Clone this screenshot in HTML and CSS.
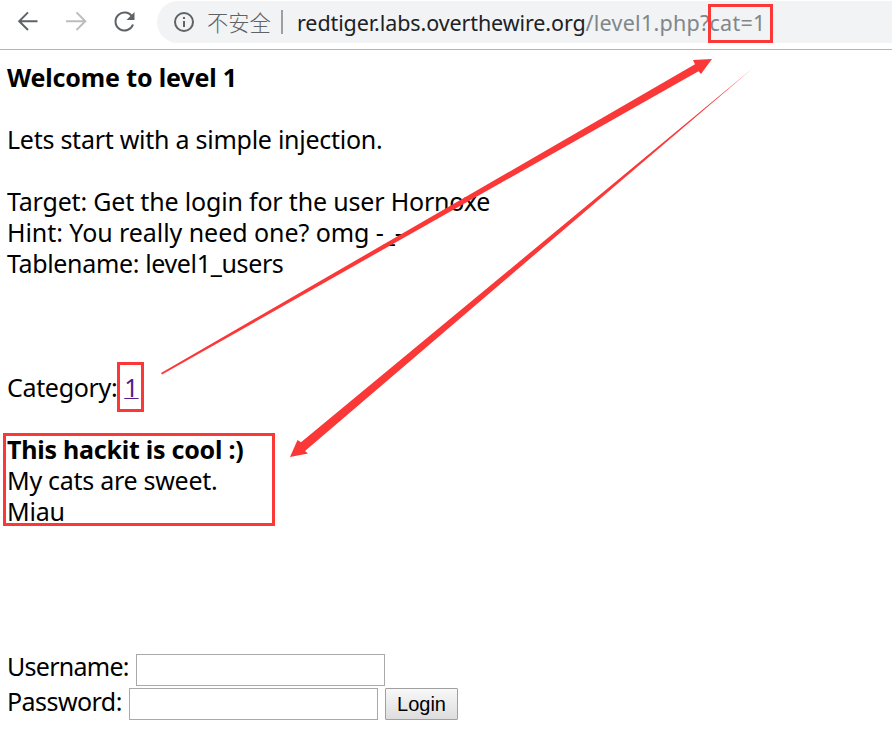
FILE: index.html
```html
<!DOCTYPE html>
<html lang="en">
<head>
<meta charset="utf-8">
<title>Level 1</title>
<link rel="stylesheet" href="styles.css">
</head>
<body>
<header class="toolbar">
  <svg class="nav" width="156" height="44" viewBox="0 0 156 44" fill="none" stroke="#5f6368" stroke-width="2">
    <path d="M37.5 21.2H20M28 12.4l-8.8 8.8 8.8 8.8"/>
    <path stroke="#bdbdbd" d="M66 21.2h18.500M76.500 12.4l8.800 8.800-8.800 8.800"/>
    <path d="M132.300 17A9 9 0 1 0 133 24.500"/>
    <path fill="#5f6368" stroke="none" d="M134.500 12v8h-8z"/>
  </svg>
  <div class="address">
    <svg class="info" width="22" height="22" viewBox="0 0 22 22"><circle cx="11" cy="11" r="9" fill="none" stroke="#5f6368" stroke-width="2"/><path fill="#5f6368" d="M10 6h2v2h-2zM10 10h2v6h-2z"/></svg>
    <span class="insecure">不安全</span>
    <span class="divider"></span>
    <span class="url"><span class="host">redtiger.labs.overthewire.org</span><span class="path">/level1.php?cat=1</span></span>
  </div>
</header>
<main>
  <p><b class="t1">Welcome to level 1</b></p>
  <p class="gap"><span class="t2">Lets start with a simple injection.</span></p>
  <p class="gap"><span class="t3">Target: Get the login for the user Hornoxe</span></p>
  <p><span class="t4">Hint: You really need one? omg -_-</span></p>
  <p><span class="t5">Tablename: level1_users</span></p>
  <p class="category"><span class="t6">Category:</span><a href="#">1</a></p>
  <p class="gap"><b class="t7">This hackit is cool :)</b></p>
  <p><span class="t8">My cats are sweet.</span></p>
  <p><span class="t9">Miau</span></p>
  <form>
    <div class="row"><label class="user" for="u"><span class="t10">Username:</span></label><input id="u" type="text"></div>
    <div class="row"><label class="pass" for="p"><span class="t11">Password:</span></label><input id="p" type="password"><button type="button">Login</button></div>
  </form>
</main>
<svg class="marks" width="892" height="743" viewBox="0 0 892 743">
  <g fill="none" stroke="#fb3838" stroke-width="3" shape-rendering="crispEdges">
    <rect x="709.500" y="5.500" width="62" height="36"/>
    <rect x="118.500" y="363.500" width="24" height="47"/>
    <rect x="4.500" y="434.500" width="269" height="90"/>
  </g>
  <g fill="#fb3838">
    <path d="M161 373L695 64.300 693 60 712 59 701 74 698.500 71.300 162 374.500z"/>
    <path d="M753 68L301 442.300 297.500 440 290 457 308 453.500 305 451z"/>
  </g>
</svg>
</body>
</html>
```
FILE: styles.css
```css
* { box-sizing: border-box; }
body {
  margin: 0;
  width: 892px;
  height: 743px;
  overflow: hidden;
  background: #fff;
  color: #000;
  font: 25px/31px "Noto Sans", "Noto Sans CJK SC", sans-serif;
}
p { margin: 0; white-space: nowrap; }
.toolbar { display: flex; height: 50px; border-bottom: 1px solid #b5b5b5; }
.nav { flex: none; }
.address {
  display: flex;
  align-items: center;
  flex: 1;
  height: 42px;
  margin: 1px 0 0 1px;
  padding-left: 16px;
  border-radius: 21px 0 0 21px;
  background: #f1f3f4;
  font-size: 21.5px;
  white-space: nowrap;
}
.info { flex: none; margin-right: 12px; }
.insecure { width: 65px; color: #5f6368; font: 300 21.3px/30px "Noto Sans CJK SC", sans-serif; }
.divider { width: 2px; height: 24px; margin: 0 14px 0 9px; background: #9aa0a6; }
.host { color: #202124; letter-spacing: -.1px; }
.path { color: #80868b; letter-spacing: .25px; }
.t1 { letter-spacing: -.15px; }
.t2 { letter-spacing: -.26px; }
.t3 { letter-spacing: -.18px; }
.t4 { letter-spacing: -.06px; }
.t5 { letter-spacing: -.35px; }
.t6 { letter-spacing: -.33px; }
.t7 { letter-spacing: -.24px; }
.t8 { letter-spacing: -.28px; }
.t9 { letter-spacing: -.25px; }
.t10 { letter-spacing: -.72px; }
.t11 { letter-spacing: -.55px; }
main { padding: 12px 0 0 7px; }
.gap { margin-top: 31px; }
.category { display: flex; margin-top: 93px; }
.category a { margin-left: 7px; color: #551a8b; text-decoration-thickness: 1px; }
form { margin-top: 127px; }
.row { display: flex; height: 32px; margin-bottom: 2px; line-height: 24px; }
.row + .row { line-height: 26px; }
.user { width: 129px; }
.pass { width: 122px; }
input { width: 249px; height: 32px; border: 1px solid #a9a9a9; background: #fff; }
button {
  width: 73px;
  height: 32px;
  margin-left: 7px;
  padding: 0;
  border: 1px solid #a0a0a0;
  border-radius: 1px;
  background: linear-gradient(#f8f8f8, #ddd);
  color: #000;
  font: 20px "Liberation Sans", sans-serif;
}
.marks { position: absolute; top: 0; left: 0; pointer-events: none; }
```
